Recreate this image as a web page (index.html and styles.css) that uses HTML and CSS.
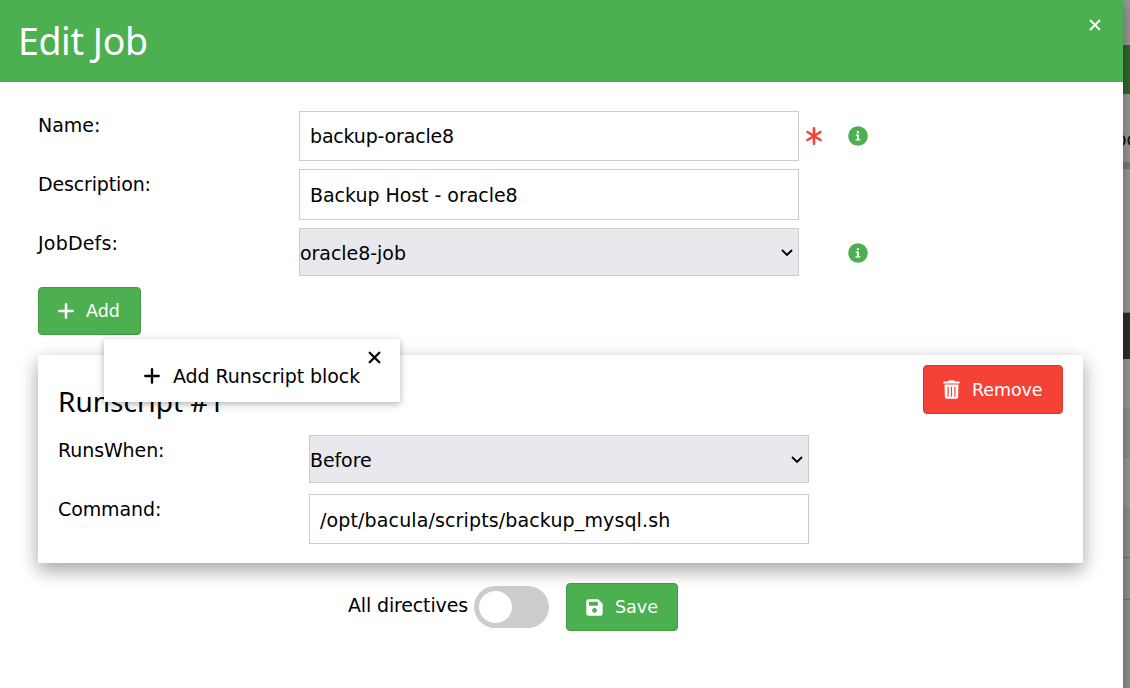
FILE: index.html
```
<!DOCTYPE html>
<html lang="en">
<head>
<meta charset="utf-8">
<title>Edit Job</title>
<link rel="stylesheet" href="styles.css">
</head>
<body>
<div class="screen">
  <main class="modal">
    <header class="modal-head">
      <h1 class="t-title">Edit Job</h1>
      <button class="close" aria-label="Close"><svg width="12" height="12" viewBox="0 0 12 12"><path d="M1 1l10 10M11 1L1 11" stroke="#fff" stroke-width="1.8"/></svg></button>
    </header>
    <div class="fields">
      <div class="row row-name">
        <label class="t-name">Name:</label>
        <div class="input"><span class="t-job">backup-oracle8</span></div>
        <svg class="required" width="16" height="18" viewBox="0 0 16 18"><path d="M8 1.300v15.400M1.500 5l13 8M14.500 5l-13 8" stroke="#f44336" stroke-width="2.600" stroke-linecap="round"/></svg>
        <svg class="info" width="20" height="20" viewBox="0 0 20 20"><circle cx="10" cy="10" r="9.8" fill="#4caf50"/><path d="M8.8 5.200h2.200v2H8.800zM7.800 8.500h3.200v4.700h1.400v1.400H7.500v-1.400h1.500v-3.300H7.800z" fill="#fff"/></svg>
      </div>
      <div class="row row-desc">
        <label class="t-desc">Description:</label>
        <div class="input"><span class="t-host">Backup Host - oracle8</span></div>
      </div>
      <div class="row row-defs">
        <label class="t-defs">JobDefs:</label>
        <div class="select"><span class="t-oracle">oracle8-job</span><svg width="12" height="8" viewBox="0 0 12 8"><path d="M1 1l5 5 5-5" fill="none" stroke="#000" stroke-width="1.9"/></svg></div>
        <svg class="info" width="20" height="20" viewBox="0 0 20 20"><circle cx="10" cy="10" r="9.8" fill="#4caf50"/><path d="M8.8 5.200h2.200v2H8.800zM7.800 8.500h3.200v4.700h1.400v1.400H7.500v-1.400h1.500v-3.300H7.800z" fill="#fff"/></svg>
      </div>
    </div>
    <div class="add-wrap">
      <button class="btn add"><svg width="16" height="16" viewBox="0 0 16 16"><path d="M8 1.3v13.4M1.3 8h13.4" stroke="#fff" stroke-width="2.5" stroke-linecap="round"/></svg><span class="t-add">Add</span></button>
      <div class="menu">
        <svg class="menu-plus" width="16" height="16" viewBox="0 0 16 16"><path d="M8 1.2v13.6M1.2 8h13.6" stroke="#000" stroke-width="2.3" stroke-linecap="round"/></svg>
        <span class="t-menu">Add Runscript block</span>
        <svg class="menu-close" width="13" height="13" viewBox="0 0 13 13"><path d="M1.7 1.7l9.6 9.6M11.3 1.7L1.7 11.3" stroke="#000" stroke-width="2.3" stroke-linecap="round"/></svg>
      </div>
    </div>
    <section class="card">
      <div class="card-head">
        <h2 class="t-card">Runscript #1</h2>
        <button class="btn remove"><svg width="17" height="19" viewBox="0 0 17 19"><path d="M.3 2.200q0-.8.8-.8h4L6 .2h5l.9 1.200h4q.8 0 .8.8v1.200H.3zM1.500 4.600h14l-.4 12.400q-.1 1.700-1.800 1.700H3.700q-1.700 0-1.800-1.700z" fill="#fff"/><path d="M5.100 7v9.200M8.500 7v9.200M11.900 7v9.200" stroke="#f44336" stroke-width="1.200" stroke-linecap="round"/></svg><span class="t-remove">Remove</span></button>
      </div>
      <div class="row row-when">
        <label class="t-when">RunsWhen:</label>
        <div class="select"><span class="t-before">Before</span><svg width="12" height="8" viewBox="0 0 12 8"><path d="M1 1l5 5 5-5" fill="none" stroke="#000" stroke-width="1.9"/></svg></div>
      </div>
      <div class="row row-cmd">
        <label class="t-cmd">Command:</label>
        <div class="input"><span class="t-path">/opt/bacula/scripts/backup_mysql.sh</span></div>
      </div>
    </section>
    <footer class="actions">
      <span class="t-all">All directives</span>
      <span class="toggle"></span>
      <button class="btn save"><svg width="17" height="17" viewBox="0 0 17 17"><path fill-rule="evenodd" d="M2.5.3h9.7l4.500 4.500v9.700q0 2.200-2.200 2.200h-12Q.3 16.700.3 14.500V2.500Q.3.3 2.500.3zM3 2.700v4h8.800v-4zM8.500 9a2.400 2.400 0 1 0 .01 0z" fill="#fff"/></svg><span class="t-save">Save</span></button>
    </footer>
  </main>
  <aside class="behind">
    <div class="b-top"></div>
    <div class="b-nav"></div>
    <div class="b-title"><span>oo</span></div>
    <div class="b-rule"></div>
    <div class="b-space"></div>
    <div class="b-head"></div>
    <div class="b-row"></div>
    <div class="b-row alt"></div>
    <div class="b-row"></div>
    <div class="b-row alt"></div>
    <div class="b-foot"></div>
    <div class="b-rest"></div>
  </aside>
</div>
</body>
</html>
```
FILE: styles.css
```
* { box-sizing: border-box; }
body { margin: 0; font: 19px/28px "DejaVu Sans", Verdana, sans-serif; color: #000; overflow: hidden; }
h1, h2 { margin: 0; font-weight: 400; font-family: "Noto Sans", "Open Sans", sans-serif; }
span, label, h1, h2 { white-space: nowrap; }
svg { display: block; flex: none; }
button { font: inherit; padding: 0; border: 0; background: none; color: #fff; }
.screen { display: flex; width: 1130px; height: 688px; overflow: hidden; }
.modal { flex: none; width: 1123px; background: #fff; position: relative; z-index: 1; box-shadow: 0 4px 10px rgba(0,0,0,.2), 0 4px 20px rgba(0,0,0,.19); }
.modal-head { height: 82px; background: #4caf50; color: #fff; display: flex; justify-content: space-between; align-items: flex-start; padding: 14px 22px 0 18px; }
.modal-head h1 { font-size: 37.5px; line-height: 54px; letter-spacing: -.4px; }
.close { margin-top: 5px; }
.fields { padding: 29px 0 0 38px; }
.row { display: flex; align-items: flex-start; }
.row label { width: 261px; flex: none; }
.row-name { height: 58px; }
.row-desc { height: 59px; }
.row-defs { height: 59px; }
.input, .select { width: 500px; flex: none; border: 1px solid #ccc; display: flex; align-items: center; }
.input { height: 50px; padding-left: 10px; background: #fff; }
.row-desc .input { height: 51px; }
.select { height: 48px; background: #e9e9ed; justify-content: space-between; padding: 1px 5px 0 0; }
.required { margin: 16px 26px 0 7px; }
.info { margin-top: 15px; }
.row-defs .info { margin-left: 49px; }
.row-desc label, .row-defs label, .row-when label, .row-cmd label { padding-top: 1px; }
.t-job { letter-spacing: -.18px; }
.t-desc { letter-spacing: -.15px; }
.t-host { letter-spacing: -.04px; }
.t-defs { letter-spacing: .2px; }
.t-oracle { letter-spacing: -.04px; }
.t-menu { letter-spacing: -.08px; }
.t-when, .t-cmd, .t-before { letter-spacing: -.1px; }
.row-cmd .input { padding-top: 1px; }
.t-path { letter-spacing: .13px; }
.btn { display: flex; align-items: center; border-radius: 4px; background: #4caf50; border: 1px solid #439a46; height: 48px; font-size: 17.5px; }
.add-wrap { position: relative; padding: 0 0 20px 38px; z-index: 2; }
.add { width: 103px; padding-left: 19px; gap: 12px; }
.menu { position: absolute; left: 104px; top: 52px; width: 296px; height: 63px; background: #fff; box-shadow: 0 2px 5px rgba(0,0,0,.16), 0 2px 10px rgba(0,0,0,.16); display: flex; padding: 23px 0 0 40px; gap: 13px; }
.menu-plus { margin-top: 6px; }
.menu-close { position: absolute; left: 264px; top: 12px; }
.card { margin-left: 38px; width: 1045px; height: 208px; background: #fff; box-shadow: 0 8px 16px rgba(0,0,0,.2), 0 6px 20px rgba(0,0,0,.19); padding: 10px 20px 0; }
.card-head { display: flex; justify-content: space-between; height: 70px; }
.card-head h2 { font-size: 28px; line-height: 42px; margin-top: 15px; }
.remove { width: 140px; height: 49px; padding-left: 19px; gap: 12px; background: #f44336; border-color: #d23a2f; }
.t-remove { letter-spacing: -.1px; }
.card .row label { width: 251px; }
.row-when { height: 59px; }
.actions { display: flex; padding: 20px 0 0 348px; }
.t-all { width: 126px; margin-top: 8px; letter-spacing: -.15px; }
.toggle { width: 75px; height: 42px; margin: 3px 17px 0 0; border-radius: 21px; background: #ccc; padding: 5px; }
.toggle::before { content: ""; display: block; width: 33px; height: 32px; border-radius: 50%; background: #fff; }
.save { width: 112px; padding-left: 19px; gap: 12px; }
.behind { width: 7px; flex: none; display: flex; flex-direction: column; background: #999; overflow: hidden; }
.b-top { height: 45px; background: #999; }
.b-nav { height: 49px; background: #2e6930; }
.b-title { height: 68px; padding-top: 31px; overflow: hidden; color: #111; }
.b-title span { display: block; margin-left: -8px; font-weight: 400; font-size: 19px; }
.b-rule { height: 7px; background: #7b7b7b; }
.b-space { height: 144px; border-bottom: 1px solid #777; }
.b-head { height: 46px; background: #2e2e2e; }
.b-row { height: 49px; }
.b-row.alt { height: 50px; background: #909090; }
.b-foot { height: 43px; margin-top: 0; border-top: 1px solid #737373; border-bottom: 1px solid #737373; background: #909090; }
.b-rest { flex: 1; background: #909090; }
```
